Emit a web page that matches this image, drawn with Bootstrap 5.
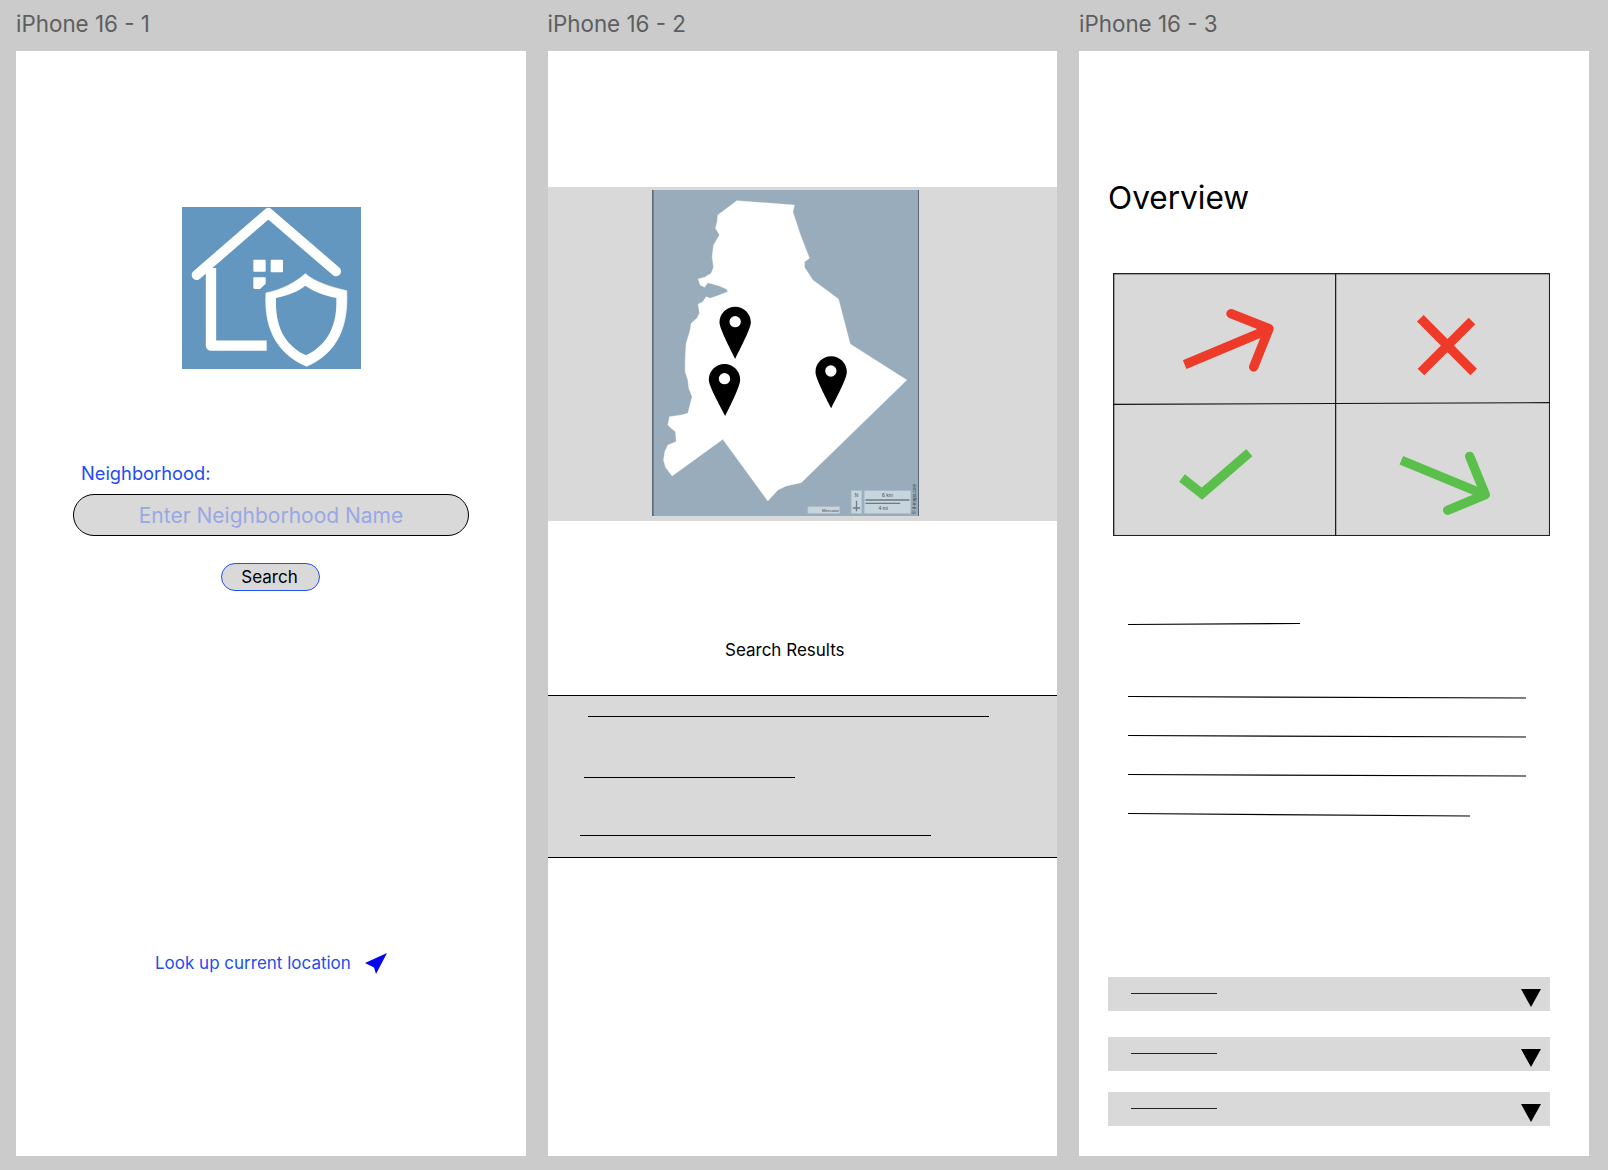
<!DOCTYPE html>
<html lang="en">
<head>
<meta charset="utf-8">
<title>iPhone 16 wireframes</title>
<link href="https://cdn.jsdelivr.net/npm/bootstrap@5.3.0/dist/css/bootstrap.min.css" rel="stylesheet">
<style>
html,body{height:1170px;overflow:hidden}
body{background:#cbcbcb;font-family:Inter,"Liberation Sans",sans-serif;color:#000}
.canvas{padding-left:16px;gap:21.500px}
.phone-col{width:510px}
.pc-mid{width:509.500px;margin-right:.500px}
.phone-title{height:51px;padding-top:9px;font-size:22.400px;line-height:30px;color:#5e5e5e;margin:0}
.phone{height:1105px;background:#fff}
.logo{margin-top:156px}
.nb-label{margin:92px 0 9px 65px;font-size:18.300px;line-height:24px;color:#1f4cf5}
.nb-input.form-control{display:block;margin-left:57px;width:396px;height:42px;background:#d9d9d9;border:1px solid #000;border-bottom-width:1.500px;text-align:center;font-size:21px;padding:0 20px}
.nb-input.form-control::placeholder{color:#9aa8e2;opacity:1}
.nb-search.btn{display:block;margin:27px 0 0 205px;width:99px;height:28px;padding:0 2px 0 0;background:#d9d9d9;border:1.500px solid #2251f0;color:#000;font-size:17px;line-height:24px}
.loc{margin:360px 0 0 139px;font-size:17px;line-height:24px;color:#1f4cf5;gap:14px}
.map-band{margin-top:136px;height:334px;background:#d9d9d9;padding:3px 0 0 104px}
.sr-title{margin:117px 0 33px 177.500px;font-size:17px;line-height:24px}
.res-band{height:163px;background:#d9d9d9;border-top:1px solid #000;border-bottom:1px solid #000;padding-top:20px}
.res-line{height:1px;background:#000}
.l1{margin-left:40px;width:401px}
.l2{margin:60px 0 0 36px;width:211px}
.l3{margin:57px 0 0 32px;width:351px}
.ov-title{margin:127px 0 0 29px;font-size:31.600px;line-height:40px;font-weight:400}
.grid-art{margin:55px 0 0 33.500px}
.lines-art{margin-top:84px}
.drop-row{margin-left:29px;width:442px;height:34px;background:#d9d9d9;padding:0 9px 0 23px}
.drop-row i{display:block;width:86px;height:1px;margin-bottom:1px;background:#222}
.drop-row svg{margin-top:8px}
.dr1{margin-top:157px}
.dr2{margin-top:26px}
.dr3{margin-top:21px}
</style>
</head>
<body>
<div class="canvas d-flex">

<section class="phone-col">
<h2 class="phone-title fw-normal">iPhone 16 - 1</h2>
<div class="phone overflow-hidden">
<svg class="logo d-block mx-auto" width="179" height="162" viewBox="96 52 537 486" role="img" aria-label="House and shield logo">
<rect x="96" y="52" width="537" height="486" fill="#6497bf"/>
<path d="M140 256 355 70 558 245" fill="none" stroke="#fff" stroke-width="30" stroke-linecap="round" stroke-linejoin="round"/>
<path d="M183 235V468H350" fill="none" stroke="#fff" stroke-width="31" stroke-linejoin="round"/>
<rect x="310" y="210" width="37" height="36" rx="3" fill="#fff"/>
<rect x="362" y="210" width="37" height="38" rx="3" fill="#fff"/>
<path d="M310 263H347V282L330 298H313L310 295Z" fill="#fff"/>
<path d="M466 240C500 268 545 284 600 296 604 400 575 495 470 545 365 495 330 400 338 296 390 285 430 270 466 240Z" fill="#6497bf"/>
<path d="M466 252C495 277 540 292 590 303 596 410 562 490 470 530 376 490 342 410 348 310 395 300 435 280 466 252Z" fill="#fff" stroke="#fff" stroke-width="2" stroke-linejoin="round"/>
<path d="M466 288C490 305 520 317 559 325 562 405 535 465 468 497 400 465 375 405 378 325 415 317 445 305 466 288Z" fill="#6497bf"/>
</svg>
<div class="nb-label">Neighborhood:</div>
<input class="nb-input form-control rounded-pill" type="text" placeholder="Enter Neighborhood Name" aria-label="Neighborhood">
<button class="nb-search btn rounded-pill" type="button">Search</button>
<div class="loc d-flex align-items-center">
<span>Look up current location</span>
<svg width="22" height="21" viewBox="0 0 22 21"><path d="M22 0 0 10 9 14.500 11 21Z" fill="#0505ee"/></svg>
</div>
</div>
</section>

<section class="phone-col pc-mid">
<h2 class="phone-title fw-normal">iPhone 16 - 2</h2>
<div class="phone overflow-hidden">
<div class="map-band">
<svg class="d-block" width="267" height="326" viewBox="38 30 800 978" role="img" aria-label="Map with three pins">
<rect x="38" y="30" width="800" height="978" fill="#98acbc"/>
<rect x="38" y="30" width="4" height="978" fill="#4d5a66"/>
<rect x="836" y="30" width="2" height="978" fill="#3a424a"/>
<path d="M292 62 465 75 460 95 483 165 510 235 495 245 495 262 520 300 597 357 632 492 802 600 485 908 440 918 415 930 385 963 250 778 98 888 78 862 72 840 76 815 85 795 110 785 108 755 95 745 85 735 90 710 125 705 145 700 150 680 158 650 148 625 145 600 137 575 137 540 140 490 152 450 155 430 172 415 180 400 176 372 190 365 200 350 212 355 240 345 265 335 262 328 240 318 205 308 195 322 182 315 176 297 195 292 215 280 222 262 218 230 222 195 240 165 228 145 233 125 235 105Z" fill="#fff" stroke="#fff" stroke-width="1" stroke-linejoin="round"/>
<g fill="#000">
<path d="M287 380C313 380 334 401 334 427 334 447 302 505 287 537 272 505 240 447 240 427 240 401 261 380 287 380Z"/>
<path d="M255 552C281 552 302 573 302 599 302 619 272 677 257 708 242 677 208 619 208 599 208 573 229 552 255 552Z"/>
<path d="M575 529C601 529 622 550 622 576 622 596 590 654 575 685 560 654 528 596 528 576 528 550 549 529 575 529Z"/>
</g>
<g fill="#fff"><circle cx="287" cy="425" r="17"/><circle cx="255" cy="596" r="17"/><circle cx="574" cy="573" r="17"/></g>
<g fill="#c6d5de" stroke="#aebdc8" stroke-width="2">
<rect x="505" y="980" width="96" height="20"/>
<rect x="635" y="932" width="32" height="68"/>
<rect x="674" y="932" width="140" height="68"/>
</g>
<g stroke="#6d7a84" stroke-width="4"><path d="M678 960H810M678 970H782M651 962V994M640 984H662"/></g>
<g font-family="Liberation Sans,sans-serif" fill="#3f484f" font-size="15" text-anchor="middle">
<text x="744" y="950">6 km</text><text x="731" y="991">4 mi</text><text x="573" y="995" font-size="13">Mercator</text><text x="651" y="952">N</text>
<text transform="translate(830 1002) rotate(-90)" text-anchor="start" font-size="14">© d-maps.com</text>
</g>
</svg>
</div>
<div class="sr-title">Search Results</div>
<div class="res-band">
<div class="res-line l1"></div>
<div class="res-line l2"></div>
<div class="res-line l3"></div>
</div>
</div>
</section>

<section class="phone-col">
<h2 class="phone-title fw-normal">iPhone 16 - 3</h2>
<div class="phone overflow-hidden">
<h1 class="ov-title">Overview</h1>
<svg class="grid-art d-block" width="437.300" height="263.300" viewBox="38 40 1312 790" role="img" aria-label="Four status icons">
<rect x="40" y="42" width="1308" height="786" fill="#d9d9d9" stroke="#222" stroke-width="4"/>
<path d="M706 42V828M40 434 1348 429" stroke="#111" stroke-width="3.500" fill="none"/>
<g fill="none" stroke="#ee3a28" stroke-width="28">
<path d="M253 315 505 209"/>
<path d="M392 162 506 207 460 322" stroke-linecap="round" stroke-linejoin="round"/>
<path d="M960 176 1120 337M1115 184 962 337"/>
</g>
<g fill="none" stroke="#5bc04b" stroke-width="28">
<path d="M245 655 305 702 447 579"/>
<path d="M903 602 1150 704"/>
<path d="M1108 590 1155 705 1042 752" stroke-linecap="round" stroke-linejoin="round"/>
</g>
</svg>
<svg class="lines-art d-block" width="510" height="200" viewBox="0 0 510 200" role="img" aria-label="Text placeholder lines">
<g stroke="#000" stroke-width="1.200" fill="none">
<path d="M49 4.500 221 3.500M49 76.500 447 78M49 115.500 447 117M49 154.500 447 156M49 193.500 391 196"/>
</g>
</svg>
<div class="drop-row dr1 d-flex justify-content-between align-items-center"><i></i><svg width="20" height="18" viewBox="0 0 20 18"><path d="M0 0H20L10 18Z"/></svg></div>
<div class="drop-row dr2 d-flex justify-content-between align-items-center"><i></i><svg width="20" height="18" viewBox="0 0 20 18"><path d="M0 0H20L10 18Z"/></svg></div>
<div class="drop-row dr3 d-flex justify-content-between align-items-center"><i></i><svg width="20" height="18" viewBox="0 0 20 18"><path d="M0 0H20L10 18Z"/></svg></div>
</div>
</section>

</div>
<script src="https://cdn.jsdelivr.net/npm/bootstrap@5.3.0/dist/js/bootstrap.bundle.min.js"></script>
</body>
</html>
